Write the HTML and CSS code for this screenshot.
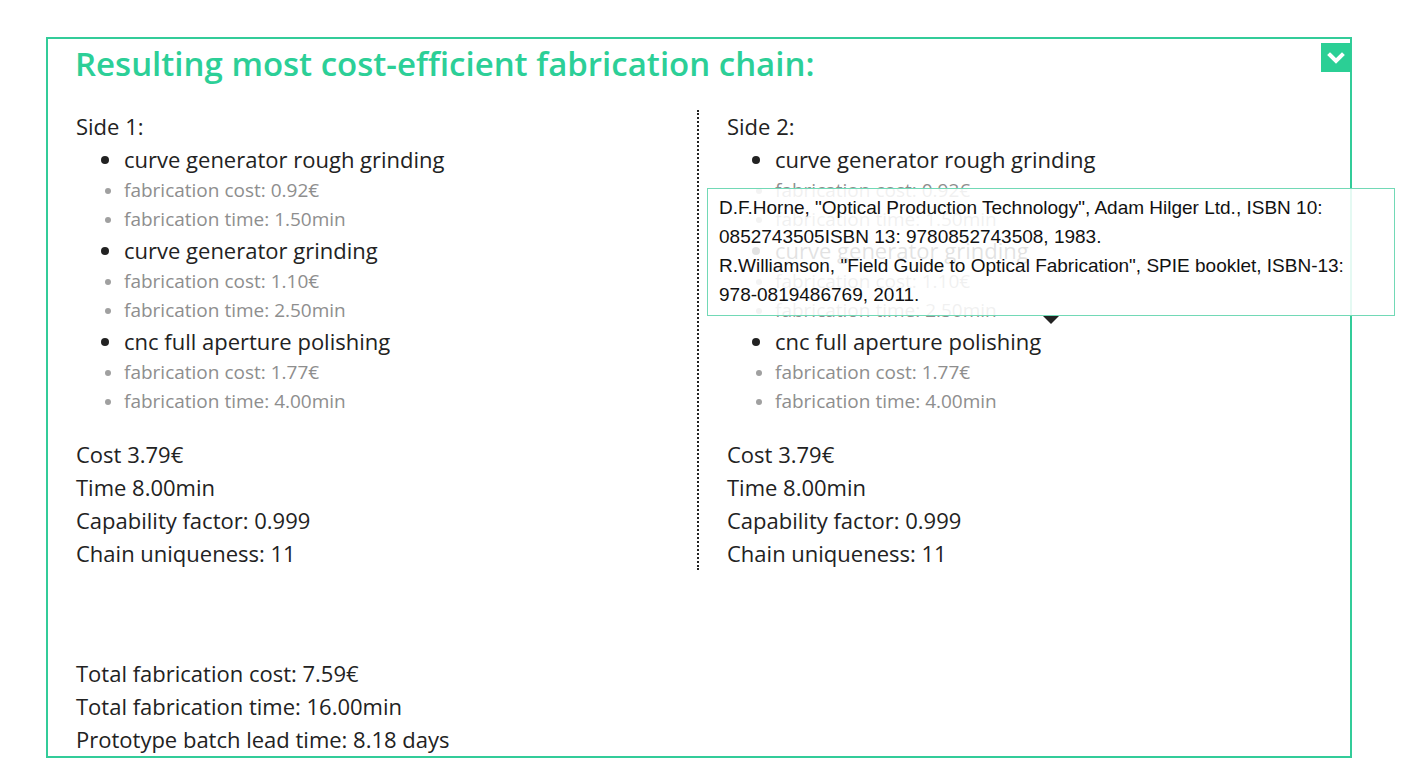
FILE: index.html
```html
<!DOCTYPE html>
<html>
<head>
<meta charset="utf-8">
<link rel="stylesheet" href="styles.css">
</head>
<body>
<div class="panel">
  <button class="toggle" aria-label="collapse">
    <svg width="18" height="12" viewBox="0 0 18 12"><path d="M3 3 L9 9 L15 3" fill="none" stroke="#fff" stroke-width="4" stroke-linecap="square"/></svg>
  </button>
  <h2 class="title">Resulting most cost-efficient fabrication chain:</h2>
  <div class="sides">
    <div class="side side-left">
      <div class="line">Side 1:</div>
      <ul class="steps">
        <li class="step">curve generator rough grinding</li>
        <li class="sub">fabrication cost: 0.92€</li>
        <li class="sub">fabrication time: 1.50min</li>
        <li class="step">curve generator grinding</li>
        <li class="sub">fabrication cost: 1.10€</li>
        <li class="sub">fabrication time: 2.50min</li>
        <li class="step">cnc full aperture polishing</li>
        <li class="sub">fabrication cost: 1.77€</li>
        <li class="sub">fabrication time: 4.00min</li>
      </ul>
      <div class="line">Cost 3.79€</div>
      <div class="line">Time 8.00min</div>
      <div class="line">Capability factor: 0.999</div>
      <div class="line">Chain uniqueness: 11</div>
    </div>
    <div class="side side-right">
      <div class="line">Side 2:</div>
      <ul class="steps">
        <li class="step">curve generator rough grinding</li>
        <li class="sub">fabrication cost: 0.92€</li>
        <li class="sub">fabrication time: 1.50min</li>
        <li class="step">curve generator grinding</li>
        <li class="sub">fabrication cost: 1.10€</li>
        <li class="sub">fabrication time: 2.50min</li>
        <li class="step">cnc full aperture polishing</li>
        <li class="sub">fabrication cost: 1.77€</li>
        <li class="sub">fabrication time: 4.00min</li>
      </ul>
      <div class="line">Cost 3.79€</div>
      <div class="line">Time 8.00min</div>
      <div class="line">Capability factor: 0.999</div>
      <div class="line">Chain uniqueness: 11</div>
      <div class="tooltip">
        D.F.Horne, "Optical Production Technology", Adam Hilger Ltd., ISBN 10: 0852743505ISBN 13: 9780852743508, 1983.<br>
        R.Williamson, "Field Guide to Optical Fabrication", SPIE booklet, ISBN-13: 978-0819486769, 2011.
        <span class="arrow"></span>
      </div>
    </div>
  </div>
  <div class="totals">
    <div class="line">Total fabrication cost: 7.59€</div>
    <div class="line">Total fabrication time: 16.00min</div>
    <div class="line">Prototype batch lead time: 8.18 days</div>
  </div>
</div>
</body>
</html>
```

FILE: styles.css
```css
html, body {
  margin: 0;
  padding: 0;
  background: #fff;
}
body {
  font-family: "Open Sans", "Noto Sans", sans-serif;
  color: #222;
  height: 765px;
  overflow: hidden;
}
.panel {
  position: relative;
  box-sizing: border-box;
  margin: 37px 0 0 46px;
  width: 1306px;
  height: 721px;
  border: 2px solid #33cc99;
  padding: 6px 28px 0 28px;
  overflow: visible;
}
.toggle {
  position: absolute;
  top: 4px;
  right: -1px;
  width: 30px;
  height: 29px;
  border: 0;
  padding: 0;
  background: #2bcf95;
  display: flex;
  align-items: center;
  justify-content: center;
}
.title {
  margin: 0 0 0 -1px;
  font-size: 33px;
  font-weight: 600;
  line-height: 38px;
  color: #2ccf97;
}
.sides {
  display: grid;
  grid-template-columns: 1fr 1fr;
  margin-top: 27px;
}
.side {
  position: relative;
}
.side-left {
  border-right: 2px dotted #222;
}
.side-right {
  padding-left: 28px;
}
.line {
  font-size: 22px;
  line-height: 33px;
}
.steps {
  margin: 0 0 22px 0;
  padding-left: 48px;
}
.step {
  font-size: 22px;
  line-height: 33px;
}
.sub {
  font-size: 19px;
  line-height: 29px;
  color: #8e8e8e;
}
.sub::marker {
  color: #a0a0a0;
  font-size: 17px;
}
.tooltip {
  position: absolute;
  left: 8px;
  top: 78px;
  width: 688px;
  box-sizing: border-box;
  padding: 4px 11px 6px 11px;
  border: 1px solid #72d9b6;
  background: rgba(255, 255, 255, 0.87);
  font-family: "Liberation Sans", Arial, sans-serif;
  font-size: 19px;
  line-height: 29px;
  color: #111;
}
.arrow {
  position: absolute;
  left: 335px;
  bottom: -9px;
  width: 0;
  height: 0;
  border-left: 8px solid transparent;
  border-right: 8px solid transparent;
  border-top: 8px solid #222;
}
.totals {
  margin-top: 87px;
}
```
